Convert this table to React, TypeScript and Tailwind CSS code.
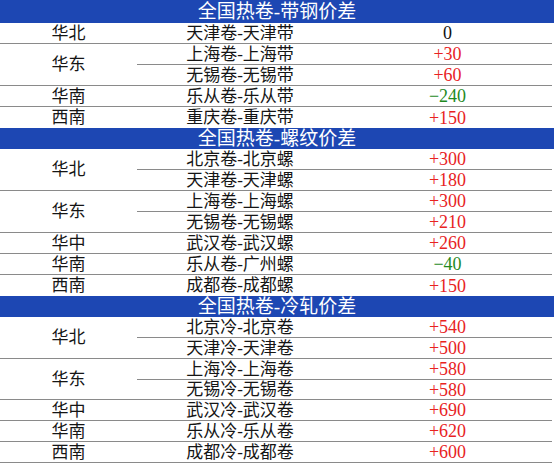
import React from 'react';

type Row = { region?: string; span?: number; name: string; value: string };

interface Section {
  title: string;
  rows: Row[];
}

const sections: Section[] = [
  {
    title: '全国热卷-带钢价差',
    rows: [
      { region: '华北', span: 1, name: '天津卷-天津带', value: '0' },
      { region: '华东', span: 2, name: '上海卷-上海带', value: '+30' },
      { name: '无锡卷-无锡带', value: '+60' },
      { region: '华南', span: 1, name: '乐从卷-乐从带', value: '-240' },
      { region: '西南', span: 1, name: '重庆卷-重庆带', value: '+150' },
    ],
  },
  {
    title: '全国热卷-螺纹价差',
    rows: [
      { region: '华北', span: 2, name: '北京卷-北京螺', value: '+300' },
      { name: '天津卷-天津螺', value: '+180' },
      { region: '华东', span: 2, name: '上海卷-上海螺', value: '+300' },
      { name: '无锡卷-无锡螺', value: '+210' },
      { region: '华中', span: 1, name: '武汉卷-武汉螺', value: '+260' },
      { region: '华南', span: 1, name: '乐从卷-广州螺', value: '-40' },
      { region: '西南', span: 1, name: '成都卷-成都螺', value: '+150' },
    ],
  },
  {
    title: '全国热卷-冷轧价差',
    rows: [
      { region: '华北', span: 2, name: '北京冷-北京卷', value: '+540' },
      { name: '天津冷-天津卷', value: '+500' },
      { region: '华东', span: 2, name: '上海冷-上海卷', value: '+580' },
      { name: '无锡冷-无锡卷', value: '+580' },
      { region: '华中', span: 1, name: '武汉冷-武汉卷', value: '+690' },
      { region: '华南', span: 1, name: '乐从冷-乐从卷', value: '+620' },
      { region: '西南', span: 1, name: '成都冷-成都卷', value: '+600' },
    ],
  },
];

const font = { fontFamily: '"Liberation Serif", "Noto Sans CJK SC", serif' };

function valueColor(v: string) {
  if (v.startsWith('+')) return 'text-[#e8231f]';
  if (v.startsWith('-')) return 'text-[#1f8a1f]';
  return 'text-[#111111]';
}

export default function App() {
  return (
    <div className="w-[554px] h-[463px] bg-white overflow-hidden text-[17px] leading-none text-[#151515]" style={font}>
      {sections.map((section, si) => {
        const last = si === sections.length - 1;
        return (
          <div key={si}>
            <div
              className={`${si === 0 ? 'h-[23px]' : 'h-[21px]'} bg-[#1d47b3] text-white text-[19px] flex items-center justify-center`}
            >
              {section.title}
            </div>
            <div className="grid grid-cols-[137px_206px_1fr] pr-[2px]">
              {section.rows.map((row, ri) => {
                const isLast = ri === section.rows.length - 1;
                const border = isLast && !last ? '' : 'border-b border-[#8a8a8a]';
                const h = last && ri === 3 ? 'h-[20px]' : 'h-[21px]';
                return (
                  <React.Fragment key={ri}>
                    {row.region && (
                      <div
                        className={`${row.span === 2 ? 'row-span-2' : h} ${border} flex items-center justify-center`}
                      >
                        {row.region}
                      </div>
                    )}
                    <div className={`${h} ${border} flex items-center justify-center`}>{row.name}</div>
                    <div
                      className={`${h} ${border} flex items-center justify-center text-[18px] ${valueColor(row.value)}`}
                    >
                      {row.value.replace('-', '−')}
                    </div>
                  </React.Fragment>
                );
              })}
            </div>
          </div>
        );
      })}
    </div>
  );
}
